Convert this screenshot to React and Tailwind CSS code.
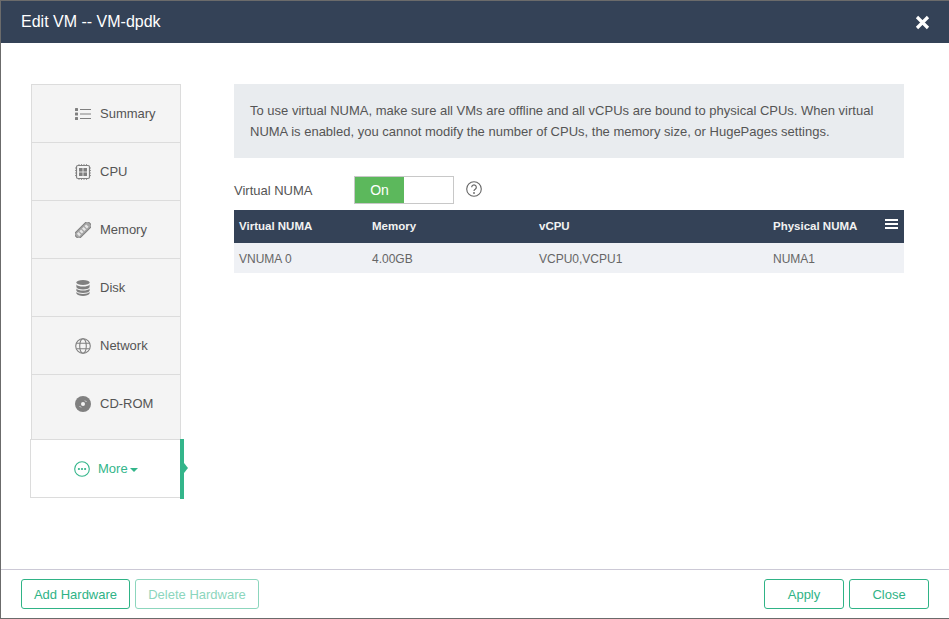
import React from 'react';

const SummaryIcon = () => (
  <svg width="16" height="14" viewBox="0 0 16 14" fill="none">
    <rect x="0" y="1" width="3" height="3" rx="0.5" fill="#808080" />
    <rect x="0" y="5.500" width="3" height="3" rx="0.5" fill="#808080" />
    <rect x="0" y="10" width="3" height="3" rx="0.5" fill="#808080" />
    <path d="M5 2.500h11M5 7h11M5 11.500h11" stroke="#808080" strokeWidth="1.200" />
  </svg>
);

const CpuIcon = () => (
  <svg width="16" height="16" viewBox="0 0 16 16" fill="none">
    <rect x="1.500" y="1.500" width="13" height="13" rx="1.500" stroke="#808080" strokeWidth="1.200" />
    <rect x="4" y="4" width="3.600" height="3.600" fill="#808080" />
    <rect x="8.400" y="4" width="3.600" height="3.600" fill="#808080" />
    <rect x="4" y="8.400" width="3.600" height="3.600" fill="#808080" />
    <rect x="8.400" y="8.400" width="3.600" height="3.600" fill="#808080" />
    <path d="M4 0v1.500M6.500 0v1.500M9 0v1.500M11.500 0v1.500M4 14.500V16M6.500 14.500V16M9 14.500V16M11.500 14.500V16M0 4h1.500M0 6.500h1.500M0 9h1.500M0 11.500h1.500M14.500 4H16M14.500 6.500H16M14.500 9H16M14.500 11.500H16" stroke="#808080" strokeWidth="0.800" />
  </svg>
);

const MemoryIcon = () => (
  <svg width="16" height="16" viewBox="0 0 16 16" fill="none">
    <g transform="rotate(-45 8 8)">
      <rect x="-1.500" y="4.500" width="19" height="7" fill="#a6a6a6" stroke="#808080" strokeWidth="1" />
      <path d="M1 6.300h2.400v3.400H1zM4.600 6.300H7v3.400H4.600zM8.200 6.300h2.400v3.400H8.200zM11.800 6.300h2.400v3.400h-2.400z" fill="#e6e6e6" />
    </g>
  </svg>
);

const DiskIcon = () => (
  <svg width="14" height="16" viewBox="0 0 14 16" fill="#808080">
    <ellipse cx="7" cy="2.600" rx="6.600" ry="2.500" />
    <path d="M0.400 4.600C1.400 6 4 6.600 7 6.600s5.600-.6 6.600-2v2.600C13 8.700 10 9.400 7 9.400S1 8.700.4 7.200z" />
    <path d="M0.400 8.400C1.400 9.800 4 10.400 7 10.400s5.600-.6 6.600-2v2.400C13 12.300 10 13 7 13S1 12.300.4 10.800z" />
    <path d="M0.400 12C1.400 13.300 4 14 7 14s5.600-.7 6.600-2v1.500C13 15 10 15.900 7 15.900S1 15 .4 13.500z" />
  </svg>
);

const NetworkIcon = () => (
  <svg width="16" height="16" viewBox="0 0 16 16" fill="none" stroke="#808080" strokeWidth="1.100">
    <circle cx="8" cy="8" r="7.300" />
    <ellipse cx="8" cy="8" rx="3.300" ry="7.300" />
    <path d="M1.400 5.300h13.200M1.400 10.700h13.200" />
  </svg>
);

const CdIcon = () => (
  <svg width="16" height="16" viewBox="0 0 16 16">
    <circle cx="8" cy="8" r="8" fill="#808080" />
    <circle cx="8" cy="8" r="2" fill="#f4f4f4" />
    <path d="M10 4.500l1.500 1.500M4.500 10L6 11.500" stroke="#e0e0e0" strokeWidth="1" />
  </svg>
);

const MoreIcon = () => (
  <svg width="16" height="16" viewBox="0 0 16 16" fill="none">
    <circle cx="8" cy="8" r="7.300" stroke="#33b58a" strokeWidth="1.100" />
    <circle cx="4.900" cy="8" r="1.100" fill="#33b58a" />
    <circle cx="8" cy="8" r="1.100" fill="#33b58a" />
    <circle cx="11.100" cy="8" r="1.100" fill="#33b58a" />
  </svg>
);

const navItems = [
  { label: 'Summary', icon: <SummaryIcon /> },
  { label: 'CPU', icon: <CpuIcon /> },
  { label: 'Memory', icon: <MemoryIcon /> },
  { label: 'Disk', icon: <DiskIcon /> },
  { label: 'Network', icon: <NetworkIcon /> },
];

const NavRow = ({ label, icon }) => (
  <div className="h-[58px] border-b border-[#dcdcdc] flex items-center pl-[43px] gap-[9px] text-[#555555]">
    <span className="w-[16px] flex justify-center">{icon}</span>
    <span>{label}</span>
  </div>
);

const columns = [
  { name: 'Virtual NUMA', value: 'VNUMA 0', width: 'w-[133px]' },
  { name: 'Memory', value: '4.00GB', width: 'w-[167px]' },
  { name: 'vCPU', value: 'VCPU0,VCPU1', width: 'w-[234px]' },
  { name: 'Physical NUMA', value: 'NUMA1', width: 'flex-1' },
];

const Button = ({ children, width, disabled }) => (
  <button className={`h-[30px] ${width} rounded-[3px] border text-[13px] pt-[1px] bg-white ${disabled ? 'border-[#8cd6bd] text-[#8cd6bd]' : 'border-[#2fb386] text-[#2fb386]'}`}>
    {children}
  </button>
);

export default function App() {
  return (
    <div className="w-[949px] h-[619px] flex flex-col bg-white border-l border-t border-b border-[#6b6b6b] overflow-hidden text-[13px] text-[#555555] font-['Liberation_Sans',Arial,sans-serif]">
      {/* Title bar */}
      <div className="h-[42px] shrink-0 bg-[#344257] flex items-center justify-between pl-[20px] pr-[19px] text-white">
        <span className="text-[16px]">Edit VM -- VM-dpdk</span>
        <svg width="15" height="15" viewBox="0 0 15 15">
          <path d="M2 2l11 11M13 2L2 13" stroke="#fff" strokeWidth="3.200" />
        </svg>
      </div>

      {/* Body */}
      <div className="flex-1 flex pt-[41px]">
        {/* Side nav */}
        <div className="w-[233px] shrink-0 pl-[29px]">
          <div className="w-[154px] relative">
            <div className="w-[150px] ml-[1px] bg-[#f4f4f4] border border-[#dcdcdc] border-b-0 h-[355px]">
              {navItems.map((item) => (
                <NavRow key={item.label} label={item.label} icon={item.icon} />
              ))}
              <div className="h-[64px] flex items-center pb-[7px] pl-[43px] gap-[9px] text-[#555555]">
                <CdIcon />
                <span>CD-ROM</span>
              </div>
            </div>
            <div className="w-[154px] h-[59px] bg-white border border-[#dcdcdc] border-r-0 flex items-center justify-between relative">
              <div className="flex items-center pl-[43px] gap-[8px] text-[#33b58a]">
                <MoreIcon />
                <span className="flex items-center gap-[2px]">
                  More
                  <svg width="8" height="4" viewBox="0 0 8 4" className="mt-[2px]">
                    <path d="M0 0h8L4 4z" fill="#33b58a" />
                  </svg>
                </span>
              </div>
              <div className="absolute right-0 -top-[1px] h-[60px] w-[4px] bg-[#33b58a]" />
              <svg width="4" height="10" viewBox="0 0 4 10" className="absolute -right-[4px] top-[23px]">
                <path d="M0 0l4 5-4 5z" fill="#33b58a" />
              </svg>
            </div>
          </div>
        </div>

        {/* Content */}
        <div className="w-[670px] shrink-0">
          <div className="h-[74px] bg-[#e9ecef] px-[16px] pt-[16px] leading-[21px]">
            To use virtual NUMA, make sure all VMs are offline and all vCPUs are bound to physical CPUs. When virtual
            <br />
            NUMA is enabled, you cannot modify the number of CPUs, the memory size, or HugePages settings.
          </div>

          <div className="flex items-center h-[28px] mt-[18px]">
            <span className="w-[120px] pt-[1px]">Virtual NUMA</span>
            <div className="w-[100px] h-[28px] border border-[#c8c8c8] bg-white flex">
              <div className="w-[49px] bg-[#5cb85c] text-white text-[14px] flex items-center justify-center">On</div>
            </div>
            <svg width="16" height="16" viewBox="0 0 16 16" fill="none" className="ml-[12px] -mt-[2px]">
              <circle cx="8" cy="8" r="7.300" stroke="#666666" strokeWidth="1.100" />
              <path d="M5.700 6.200a2.300 2.300 0 1 1 3.500 2c-.8.5-1.200.9-1.200 1.800" stroke="#666666" strokeWidth="1.200" />
              <circle cx="8" cy="12" r="0.900" fill="#666666" />
            </svg>
          </div>

          <div className="mt-[6px]">
            <div className="relative h-[33px] bg-[#344257] flex items-center pl-[5px] text-[#f2f2f2] font-bold text-[11.500px]">
              {columns.map((col) => (
                <span key={col.name} className={col.width}>{col.name}</span>
              ))}
              <svg width="13" height="10" viewBox="0 0 13 10" className="absolute right-[6px] top-[9px]">
                <path d="M0 0h13v2H0zM0 4h13v2H0zM0 8h13v2H0z" fill="#fff" />
              </svg>
            </div>
            <div className="h-[30px] bg-[#eff1f5] flex items-center pl-[5px] pt-[2px] text-[#666666] text-[12px]">
              {columns.map((col) => (
                <span key={col.name} className={col.width}>{col.value}</span>
              ))}
            </div>
          </div>
        </div>
      </div>

      {/* Footer */}
      <div className="h-[49px] shrink-0 border-t border-[#ccc9d6] flex justify-between items-start pt-[9px] pl-[20px] pr-[20px]">
        <div className="flex gap-[5px]">
          <Button width="w-[109px]">Add Hardware</Button>
          <Button width="w-[124px]" disabled>Delete Hardware</Button>
        </div>
        <div className="flex gap-[5px]">
          <Button width="w-[80px]">Apply</Button>
          <Button width="w-[80px]">Close</Button>
        </div>
      </div>
    </div>
  );
}
